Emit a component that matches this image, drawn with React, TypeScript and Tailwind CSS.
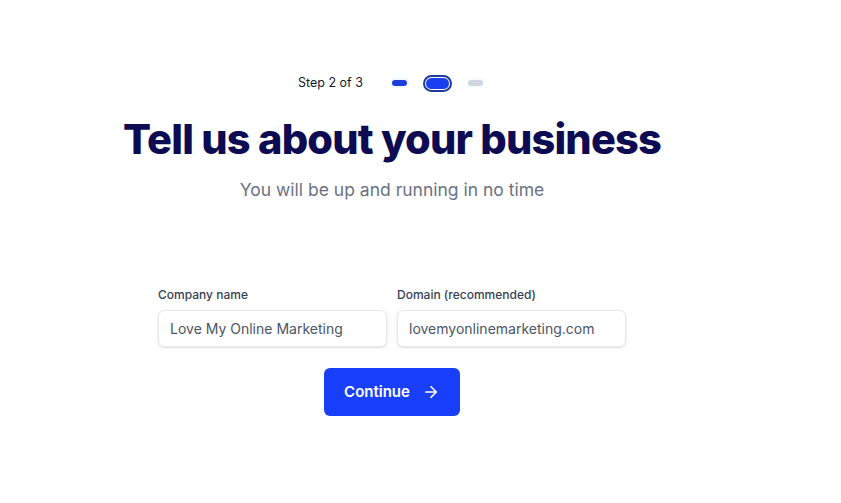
import { ArrowRight } from "lucide-react";

function StepDots() {
  return (
    <div className="flex items-center gap-[16px]">
      <span className="block h-[6px] w-[15px] rounded-full bg-[#1d3fd8] ring-2 ring-blue-50" />
      <span className="flex h-[17px] w-[29px] items-center justify-center rounded-full border-2 border-[#1e3a9a] bg-white">
        <span className="block h-[11px] w-[23px] rounded-full bg-[#1a3ff0]" />
      </span>
      <span className="block h-[6px] w-[15px] rounded-full bg-[#cfd6e2] ring-2 ring-slate-50" />
    </div>
  );
}

export default function App() {
  return (
    <div className="min-h-[503px] bg-white font-['Inter','Liberation_Sans',sans-serif]">
      <div className="flex w-[784px] flex-col items-center pt-[74px]">
        <div className="mr-[3px] flex items-center gap-[29px]">
          <p className="text-[12.5px] text-gray-900">Step 2 of 3</p>
          <StepDots />
        </div>

        <h1 className="mt-[20px] text-[41.5px] leading-[52px] font-extrabold tracking-[-0.02em] text-[#0d0b52]">
          Tell us about your business
        </h1>
        <p className="mt-[11px] text-[17.5px] leading-7 text-gray-500">
          You will be up and running in no time
        </p>

        <form className="mt-[83px] flex flex-col items-center">
          <div className="flex gap-[10px]">
            <label className="flex w-[229px] flex-col gap-[7px]">
              <span className="text-[12px] leading-4 font-medium text-gray-700">
                Company name
              </span>
              <input
                defaultValue="Love My Online Marketing"
                className="h-[37px] rounded-md border border-gray-200 px-[11px] text-[14px] text-gray-600 shadow-sm outline-none"
              />
            </label>
            <label className="flex w-[229px] flex-col gap-[7px]">
              <span className="text-[12px] leading-4 font-medium text-gray-700">
                Domain (recommended)
              </span>
              <input
                defaultValue="lovemyonlinemarketing.com"
                className="h-[37px] rounded-md border border-gray-200 px-[11px] text-[14px] text-gray-600 shadow-sm outline-none"
              />
            </label>
          </div>

          <button
            type="button"
            className="mt-[21px] flex h-[48px] w-[136px] items-center justify-center gap-[12px] rounded-md bg-[#1a3ffb] text-[15px] font-semibold text-white"
          >
            Continue
            <ArrowRight className="h-[18px] w-[18px]" strokeWidth={2.25} />
          </button>
        </form>
      </div>
    </div>
  );
}
